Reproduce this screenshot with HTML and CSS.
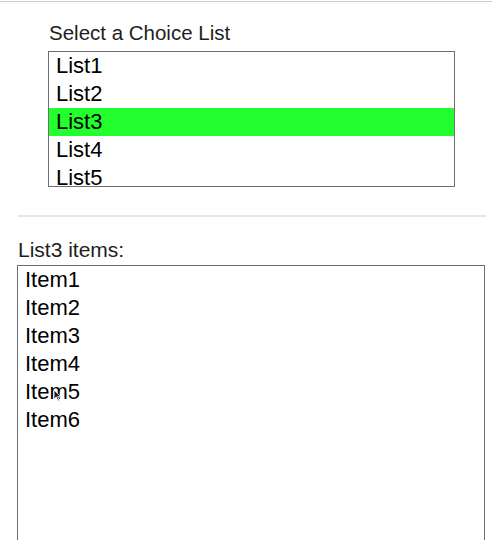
FILE: index.html
```html
<!DOCTYPE html>
<html>
<head>
<meta charset="utf-8">
<link rel="stylesheet" href="styles.css">
</head>
<body>
<div class="page">
  <div class="chooser">
    <div class="label">Select a Choice List</div>
    <div class="listbox">
      <div class="opt">List1</div>
      <div class="opt">List2</div>
      <div class="opt selected">List3</div>
      <div class="opt">List4</div>
      <div class="opt">List5</div>
    </div>
  </div>
  <hr class="divider">
  <div class="items">
    <div class="label small">List3 items:</div>
    <div class="itembox">
      <div class="item">Item1</div>
      <div class="item">Item2</div>
      <div class="item">Item3</div>
      <div class="item">Item4</div>
      <div class="item cursor-host">Item5<svg class="cursor" width="9" height="13" viewBox="0 0 9 13"><path d="M1 1 L1 10 L3.3 8 L5 12 L6.3 11.4 L4.7 7.6 L7.8 7.6 Z" fill="#222" stroke="#fff" stroke-width="0.8"/></svg></div>
      <div class="item">Item6</div>
    </div>
  </div>
</div>
</body>
</html>
```
FILE: styles.css
```css
html, body {
  margin: 0;
  padding: 0;
  background: #fff;
}
body {
  font-family: "Liberation Sans", Arial, Helvetica, sans-serif;
  color: #000;
  overflow: hidden;
  height: 540px;
}
.page {
  border-top: 1px solid #cfcfcf;
  margin-top: 1px;
}
.chooser {
  padding: 19px 0 0 48px;
}
.label {
  font-size: 20.5px;
  line-height: 24px;
  color: #1e1e1e;
  padding-left: 1px;
  margin-bottom: 6px;
}
.listbox {
  width: 405px;
  height: 134px;
  border: 1px solid #6e6e6e;
  overflow: hidden;
}
.opt {
  height: 28px;
  line-height: 28px;
  font-size: 22px;
  padding-left: 7px;
}
.opt.selected {
  background: #22fe2e;
}
.divider {
  border: 0;
  border-top: 2px solid #e6e6e6;
  margin: 28px 6px 0 18px;
  height: 0;
}
.items {
  padding: 22px 0 0 17px;
}
.label.small {
  font-size: 21px;
  line-height: 22px;
  padding-left: 1px;
  margin-bottom: 4px;
}
.itembox {
  width: 466px;
  height: 300px;
  border: 1px solid #6e6e6e;
}
.item {
  height: 28px;
  line-height: 28px;
  font-size: 22px;
  padding-left: 7px;
}
.cursor-host {
  position: relative;
}
.cursor {
  position: absolute;
  left: 35px;
  top: 11px;
}
```
